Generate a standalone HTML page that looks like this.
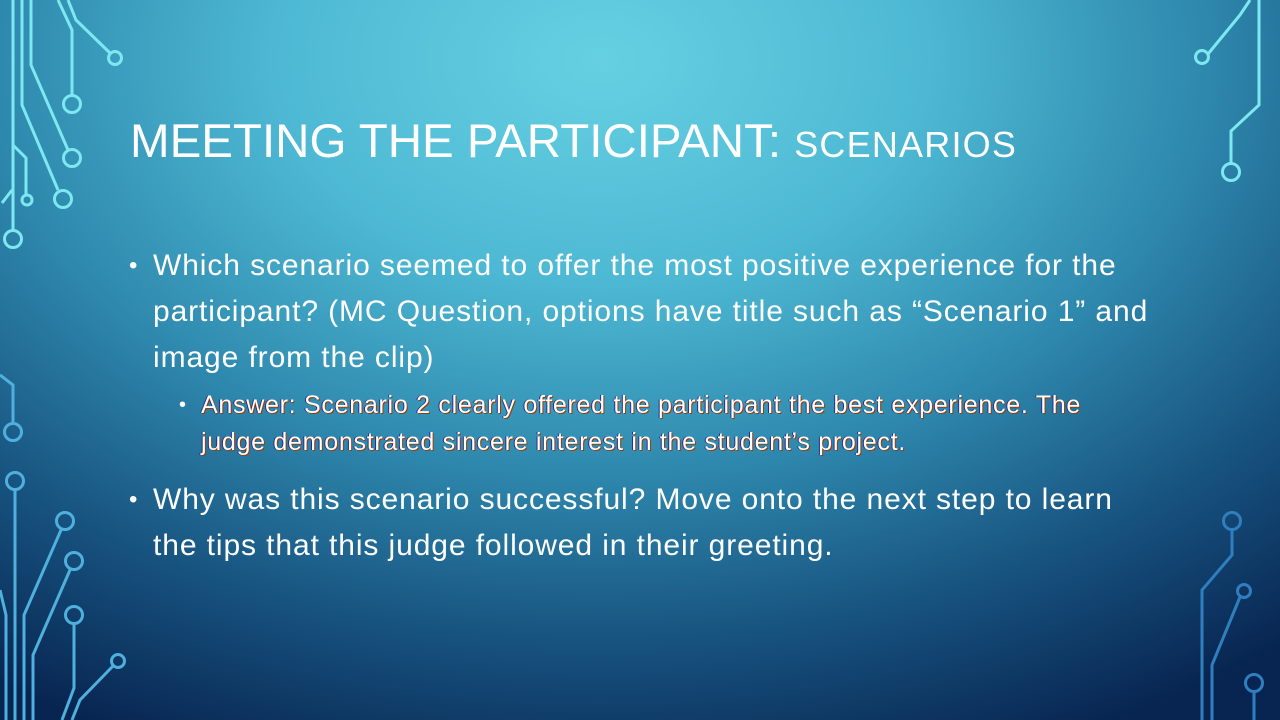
<!DOCTYPE html>
<html><head><meta charset="utf-8"><style>
html,body{margin:0;padding:0}
body{width:1280px;height:720px;overflow:hidden;position:relative;font-family:"Liberation Sans",Arial,sans-serif;color:#fff;
background:radial-gradient(ellipse 1100px 750px at 600px 60px,#66d0e2 0%,#4db8d3 30%,#2e88ad 55%,#17527f 78%,#082450 100%);}
svg{position:absolute;left:0;top:0}
.t{position:absolute;left:130px;top:114px;font-size:47.5px;white-space:nowrap}
.t span{font-size:36px;letter-spacing:1.2px}
.b{position:absolute;left:153px;font-size:30px;line-height:46px;white-space:nowrap;letter-spacing:0.9px}
.b:before{content:"•";position:absolute;left:-24px;font-size:24px}
.s{position:absolute;left:201px;font-size:25px;line-height:37px;white-space:nowrap;letter-spacing:0.72px;text-shadow:1px 1px 0 #9a3d00,-1px 0 0 #2a2a8a}
.s:before{content:"•";position:absolute;left:-22px;font-size:20px;text-shadow:none}
</style></head><body>
<svg width="1280" height="720" fill="none" stroke-width="3">
<g stroke="#7ee8f0">
<path d="M13 0V230"/><circle cx="13" cy="239" r="8.5"/>
<path d="M22 0V105L58 190"/><circle cx="63" cy="199" r="8.5"/>
<path d="M31 0V65L68 150"/><circle cx="72" cy="158" r="8.5"/>
<path d="M58 0L72 30V95"/><circle cx="72" cy="104" r="8.5"/>
<path d="M68 0L76 20L110 53"/><circle cx="115" cy="58" r="6.5"/>
<path d="M13 145L26 158V195"/><circle cx="27" cy="200" r="5"/>
<path d="M2 203L12 190"/>
<path d="M1250 0L1240 15L1208 54"/><circle cx="1202" cy="57" r="6.5"/>
<path d="M1259 0V105L1231 131V163"/><circle cx="1231" cy="172" r="8.5"/>
</g>
<g stroke="#4fb0dd">
<path d="M0 375L13 385V422"/><circle cx="13" cy="432" r="8.5"/>
<circle cx="15" cy="481" r="8.5"/><path d="M15 490V720"/>
<circle cx="65" cy="521" r="8.5"/><path d="M61 530L24 615V720"/>
<circle cx="74" cy="561" r="8.5"/><path d="M70 570L33 655V720"/>
<circle cx="74" cy="615" r="8.5"/><path d="M74 624V688L62 720"/>
<circle cx="118" cy="661" r="6.5"/><path d="M113 666L80 700L72 720"/>
<path d="M0 590L6 615V720"/>
</g>
<g stroke="#2f7fbf">
<circle cx="1232" cy="521" r="8.5"/><path d="M1232 530V555L1202 590V720"/>
<circle cx="1244" cy="591" r="6.5"/><path d="M1240 597L1212 665V720"/>
<circle cx="1254" cy="683" r="8.5"/><path d="M1254 692V720"/>
</g>
</svg>
<div class="t">MEETING THE PARTICIPANT: <span>SCENARIOS</span></div>
<div class="b" style="top:243px">Which scenario seemed to offer the most positive experience for the<br>participant? (MC Question, options have title such as “Scenario 1” and<br>image from the clip)</div>
<div class="s" style="top:387px">Answer: Scenario 2 clearly offered the participant the best experience. The<br>judge demonstrated sincere interest in the student’s project.</div>
<div class="b" style="top:477px">Why was this scenario successful? Move onto the next step to learn<br>the tips that this judge followed in their greeting.</div>
</body></html>
